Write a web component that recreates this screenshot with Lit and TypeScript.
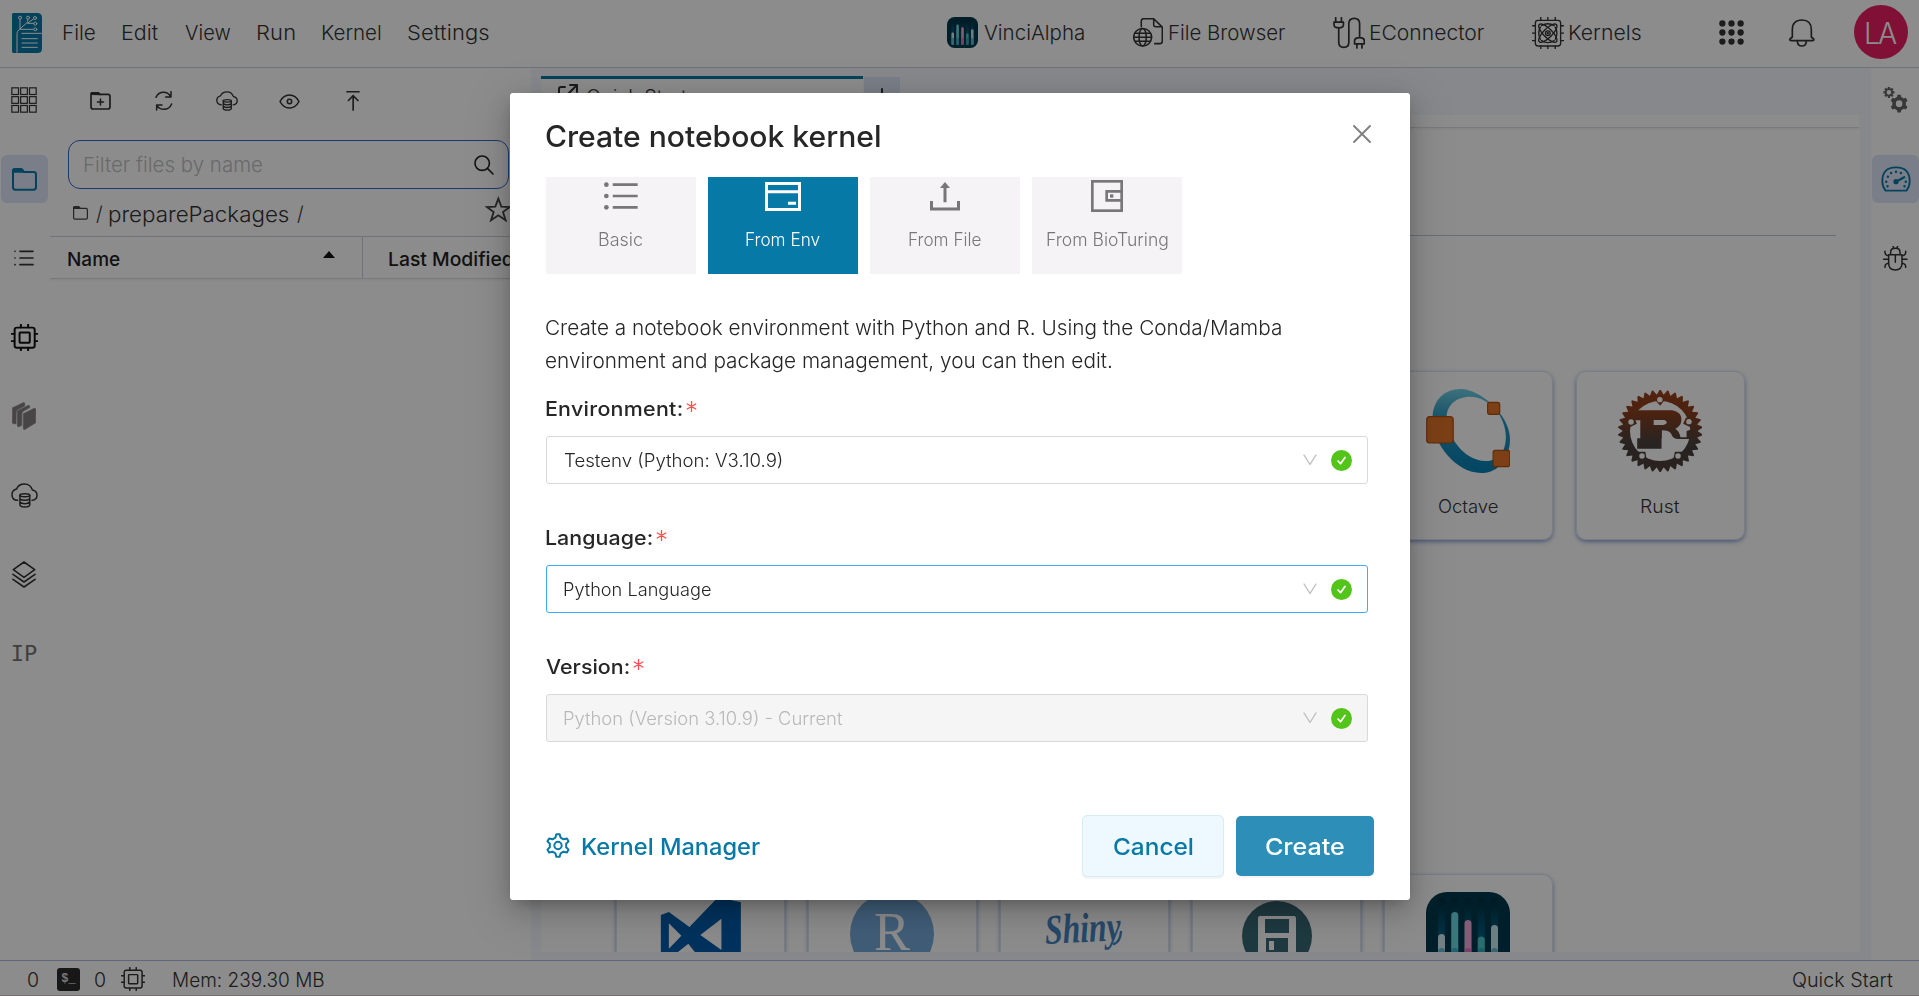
import { LitElement, html, svg, css } from "lit";
import { customElement } from "lit/decorators.js";

const FAMILY = 'Inter, "Liberation Sans", sans-serif';
const pen = document.createElement("canvas").getContext("2d")!;

// Text whose glyphs span exactly `width` pixels: slightly widened letters, the rest through letter-spacing.
const label = (text: string, width: number, size: number, weight = 400) => {
  pen.font = `${weight} ${size}px ${FAMILY}`;
  const m = pen.measureText(text);
  const ink = m.actualBoundingBoxLeft + m.actualBoundingBoxRight;
  const sx = Math.min(1.07, Math.max(0.95, width / ink));
  const ls = text.length > 1 ? (width / sx - ink) / (text.length - 1) : 0;
  return html`<span class="t" style="width:${width}px;font-size:${size}px;font-weight:${weight}"><span class="g" style="letter-spacing:${ls.toFixed(3)}px;transform:scaleX(${sx.toFixed(4)});text-indent:${m.actualBoundingBoxLeft.toFixed(2)}px">${text}</span></span>`;
};

const gear = (cx: number, cy: number, ro: number, ri: number, n: number, duty = 0.25, tip = 0.16) => {
  let d = "";
  for (let i = 0; i < n; i++) {
    const a = (i / n) * Math.PI * 2 - Math.PI / 2;
    const s = (Math.PI * 2) / n;
    const pts: [number, number][] = [[a - s * duty, ri], [a - s * tip, ro], [a + s * tip, ro], [a + s * duty, ri]];
    for (const [ang, r] of pts) d += `${d ? "L" : "M"}${(cx + r * Math.cos(ang)).toFixed(1)} ${(cy + r * Math.sin(ang)).toFixed(1)}`;
  }
  return d + "Z";
};

const icon = (w: number, h: number, box: string, body: unknown, cls = "") =>
  html`<svg class="ic ${cls}" width=${w} height=${h} viewBox=${box} preserveAspectRatio="none" fill="none" stroke="currentColor" stroke-width="6" stroke-linecap="round" stroke-linejoin="round">${body}</svg>`;

const logo = icon(30, 40, "36 39 90 120", svg`
  <path stroke="none" fill="#0779a6" d="M40 39H112Q126 39 126 54V146Q126 159 112 159H40Q36 159 36 154V44Q36 39 40 39Z"/>
  <g stroke="#fff" stroke-width="3"><path d="M51 157V101Q51 94 57 89L79 70Q84 66 84 58M60 58V87M100 57L82 70M84 70H101M60 88H100M66 100H124M66 116H112M66 129H112M66 142H112"/>
  <circle cx="60" cy="53" r="4.5"/><circle cx="84" cy="53" r="4.5"/><circle cx="105" cy="54" r="4.5"/><circle cx="106" cy="71" r="4.5"/><circle cx="106" cy="88" r="4.5"/></g>`);

const folder = (w: number, h: number, cls = "") => icon(w, h, "35 503 74 68", svg`
  <path d="M38 513V560Q38 567 45 567H99Q106 567 106 560V522Q106 515 99 515H70L63 507H44Q38 507 38 513Z"/>
  <path d="M38 514V509Q40 506 44 506H63L70 514Z" fill="currentColor"/>`, cls);

const newFolder = icon(21, 18, "272 276 62 54", svg`
  <path stroke-width="5" d="M275 284V321Q275 327 281 327H325Q331 327 331 321V289Q331 283 325 283H302L296 278H280Q275 278 275 284Z"/>
  <path fill="currentColor" stroke-width="4" d="M276 283V279H297L302 284Z"/><path stroke-width="4.5" d="M303 297V315M294 306H312"/>`);

const refresh = icon(18, 20, "466 273 54 60", svg`
  <g stroke-width="4.5"><path d="M469 292Q476 277 492 277Q506 277 513 290M514 275V291H498"/><path d="M516 312Q509 328 493 328Q479 328 471 316M471 330V315H487"/></g>`);

const cloudDb = (w: number, h: number, s = 4.5) => icon(w, h, "31 577 82 75", svg`
  <g stroke-width=${s}><path d="M51 629Q34 628 34 612Q34 598 48 595Q54 580 72 580Q90 580 96 598Q110 600 110 614Q110 628 95 629"/>
  <ellipse cx="73" cy="614" rx="15" ry="4.5"/><path d="M58 614V643Q60 649 73 649Q86 649 88 643V614M58 624Q62 629 73 629Q84 629 88 624M58 634Q62 639 73 639Q84 639 88 634"/></g>`);

const eye = icon(21, 15, "839 281 62 44", svg`
  <g stroke-width="4.5"><path d="M842 303Q852 284 870 284Q888 284 898 303Q888 322 870 322Q852 322 842 303Z"/><circle cx="870" cy="303" r="6.5"/></g>`);

const toTop = icon(14, 20, "1037 273 43 60", svg`<path stroke-width="5" stroke-linecap="butt" stroke-linejoin="miter" d="M1038 275H1079M1059 332V290M1043 303L1059 287L1075 303"/>`);

const squares = icon(26, 26, "33 264 78 78", svg`<g stroke-width="3.6" stroke-linejoin="miter">${[0, 1, 2].map((r) => [0, 1, 2].map((c) => svg`<rect x=${35.5 + c * 26.5} y=${266.5 + r * 26.5} width="20" height="20"/>`))}</g>`);

const list = icon(20, 16, "42 750 60 48", svg`<path stroke-width="5" d="M60 754H99M60 774H99M60 794H99"/><path stroke-width="5" d="M45 754H45.1M45 774H45.1M45 794H45.1"/>`);

const chip = (w: number, s = 6) => icon(w, w, "31 100 82 82", svg`
  <g stroke-width=${s}><rect x="42" y="111" width="61" height="61" rx="7"/><rect x="57" y="126" width="31" height="31" rx="2"/>
  <path d="M61 102V110M83 102V110M61 173V180M83 173V180M33 130H41M33 152H41M104 130H111M104 152H111"/></g>`);

const books = icon(24, 28, "36 335 72 85", svg`
  <g fill="currentColor" stroke-width="2"><path d="M37 353L70 337Q74 336 74 340V347L55 357Q48 360 48 366V401L41 401Q37 401 37 397Z"/>
  <path d="M52 362L84 346Q89 345 89 348V352L73 361Q65 364 65 372V406L56 410Q52 410 52 406Z"/><path d="M70 371L103 354Q107 353 107 358V398L75 418Q70 420 70 415Z"/></g>`);

const layers = icon(24, 27, "35 811 74 81", svg`<path stroke-width="5" d="M72 814L105 837L72 860L39 837ZM38 851L72 874L106 851M38 866L72 889L106 866"/>`);

const star = icon(26, 26, "1455 586 78 78", svg`<path stroke-width="5.5" stroke-linejoin="miter" d="M1495 594L1504 618L1529 619L1509 634L1517 659L1495 644L1473 659L1481 634L1461 619L1486 618Z"/>`);

const search = icon(20, 20, "1421 464 61 61", svg`<g stroke-width="5"><circle cx="1446" cy="489" r="22"/><path d="M1462 505L1479 522"/></g>`);

const vinci = (w: number, id: string) => {
  const bars: [number, number, string][] = [[24, 84, "#cfeaf0"], [50.5, 40, "#6ad8e0"], [77, 56, "#f0a8d8"], [103.5, 89, "#48c8c8"], [130, 66, "#c4e8ee"]];
  return icon(w, w, "0 0 168 168", svg`<defs>
    <linearGradient id=${id} x1="0" y1="0" x2="0" y2="1"><stop offset="0" stop-color="#00303f"/><stop offset=".7" stop-color="#006a90"/><stop offset="1" stop-color="#004a66"/></linearGradient></defs>
    <rect width="168" height="168" rx="42" stroke="none" fill="#023a4d"/>
    <g stroke="none">${bars.map(([x, y, c], i) => svg`<rect x=${x} y="13" width="14" height="140" fill=${`url(#${id})`}/><rect x=${x} y=${y} width="14" height=${152 - y} rx="7" fill=${c}/><rect x=${x} y="112" width="14" height="40" rx="7" fill=${i === 2 ? "#e04aa4" : "#1790b4"} opacity=".55"/>`)}</g>`);
};

const fileGlobe = icon(30, 29, "609 53 87 86", svg`
  <g stroke-width="4.5"><path d="M633 79V62Q633 55 640 55H669L694 80V122Q694 129 687 129H672M669 56V73Q669 79 675 79H692"/>
  <circle cx="637" cy="110" r="26"/><ellipse cx="637" cy="110" rx="10.5" ry="26"/><path d="M611 110H663M615 98H659M615 122H659"/></g>`);

const plug = icon(32, 32, "1205 49 95 95", svg`
  <g stroke-width="5"><path d="M1213 51V63M1230 51V63M1208 64H1236V72Q1236 81 1222 81Q1208 81 1208 72ZM1222 82V124Q1222 139 1237 139Q1252 139 1252 124V69Q1252 53 1268 53Q1284 53 1284 69V109M1269 129V120Q1269 110 1284 110Q1298 110 1298 120V129ZM1276 131V141M1291 131V141"/></g>`);

const kernelIcon = icon(32, 32, "305 49 95 95", svg`
  <g stroke-width="4"><rect x="315" y="59" width="75" height="76" rx="8"/><path d="M331 50V58M352 50V58M374 50V58M331 135V143M352 135V143M374 135V143M306 75H314M306 97H314M306 119H314M391 75H399M391 97H399M391 119H399"/>
  <ellipse cx="352" cy="97" rx="36" ry="13" transform="rotate(45 352 97)"/><ellipse cx="352" cy="97" rx="36" ry="13" transform="rotate(-45 352 97)"/><path d="M333 75Q352 63 371 75M333 119Q352 131 371 119M330 79Q320 97 330 115M374 79Q384 97 374 115"/><circle cx="352" cy="97" r="7"/><circle cx="352" cy="97" r="1.5"/></g>`);

const dots = icon(25, 25, "866 59 74 74", svg`<g stroke="none" fill="currentColor">${[0, 1, 2].map((r) => [0, 1, 2].map((c) => svg`<circle cx=${876 + c * 27} cy=${69 + r * 27} r="9.3"/>`))}</g>`);

const bell = icon(26, 28, "1076 54 78 84", svg`<g stroke-width="5"><path d="M1086 108V86Q1086 57 1115 57Q1143 57 1143 86V108L1150 114Q1152 119 1146 119H1083Q1077 119 1079 114Z"/><path d="M1101 121Q1102 135 1115 135Q1127 135 1128 121"/></g>`);

const gears = icon(25, 26, "1359 261 76 78", svg`<g stroke="none" fill="currentColor" fill-rule="evenodd">
  <path d=${gear(1377, 277, 17, 12.5, 8, 0.38, 0.24) + "M1370 277a7 7 0 1 0 14 0a7 7 0 1 0 -14 0Z"}/>
  <path d=${gear(1408, 311, 27, 21, 6, 0.3, 0.17) + "M1398 311a10 10 0 1 0 20 0a10 10 0 1 0 -20 0Z"}/></g>`);

const gauge = icon(30, 26, "1352 498 92 78", svg`
  <path stroke-width="5.5" d="M1366 572Q1356 560 1356 544Q1356 502 1398 502Q1440 502 1440 544Q1440 560 1430 572Z"/>
  <path stroke-width="7" d="M1398 545L1423 532"/><circle cx="1398" cy="545" r="5" fill="currentColor"/>
  <path stroke-width="7.5" d="M1372 559h.1M1368 545h.1M1373 530h.1M1383 519h.1M1398 515h.1M1413 519h.1M1428 545h.1M1424 559h.1"/>`);

const bug = icon(25, 25, "1361 737 75 75", svg`<g stroke-width="4.5">
  <path d="M1391 738L1393 743M1405 738L1403 743M1384 762V755Q1384 744 1398 744Q1412 744 1412 755V762M1378 763H1418V789Q1418 809 1398 809Q1378 809 1378 789ZM1398 766V786M1378 766Q1366 765 1367 753M1418 766Q1430 765 1429 753M1363 777H1377M1419 777H1433M1378 789Q1366 790 1367 801M1418 789Q1430 790 1429 801"/></g>`);

const terminal = html`<span class="term">$_</span>`;

const octave = icon(84, 84, "134 147 244 252", svg`<defs><linearGradient id="oc" x1="0" y1="0" x2="0" y2="1"><stop offset="0" stop-color="#6fd0e4"/><stop offset=".35" stop-color="#2a98c0"/><stop offset="1" stop-color="#0480b4"/></linearGradient></defs>
  <path stroke="none" fill="url(#oc)" fill-rule="evenodd" d="M236 147C290 147 378 224 378 296C378 356 344 399 294 399C224 399 153 315 153 235C153 182 186 147 236 147ZM262 170C219 170 194 198 194 232C194 290 246 363 306 363C346 363 366 334 366 290C366 226 314 170 262 170Z"/>
  <g fill="#e27428" stroke="#b04f12" stroke-width="3.5"><rect x="136" y="230" width="77" height="79" rx="9"/><rect x="313" y="187" width="35" height="36" rx="6"/><rect x="329" y="331" width="48" height="49" rx="6"/></g>`);

const rust = icon(84, 84, "692 146 245 252", svg`<defs><linearGradient id="ru" gradientUnits="userSpaceOnUse" x1="0" y1="148" x2="0" y2="396"><stop offset="0" stop-color="#98401a"/><stop offset=".28" stop-color="#8a3f1f"/><stop offset=".65" stop-color="#49423f"/><stop offset="1" stop-color="#4c3d35"/></linearGradient></defs>
  <g fill="url(#ru)" stroke="none"><path fill-rule="evenodd" d=${gear(815, 272, 123, 110, 34, 0.48, 0.08) + "M727 272a88 90 0 1 0 176 0a88 90 0 1 0 -176 0Z"}/>
  <path fill-rule="evenodd" d="M748 210H850Q878 215 877 240Q876 258 859 265Q871 272 874 291H892V272L912 265V296H868Q852 296 847 280Q840 270 820 270V294H819V325H748V294H757V240H730ZM796 239V254H824Q834 252 834 246Q834 240 824 239Z"/>
  <path d="M795 172H833L815 196ZM718 228L740 232L747 250L722 263ZM912 228L890 232L882 250L908 263ZM738 334H772L776 364L756 370ZM892 334H858L852 364L876 370Z"/></g>
  <g fill="#fff" stroke="none"><circle cx="814" cy="178" r="8"/><circle cx="730" cy="245" r="8"/><circle cx="899" cy="244" r="8"/><circle cx="762" cy="347" r="8"/><circle cx="867" cy="347" r="8"/></g>`);

const vscode = icon(84, 84, "256 336 147 252", svg`<path stroke="none" fill="#005cab" fill-rule="evenodd" d="M261 405L275 396L311 441L361 352L401 367V590L361 605L309 491L275 538L261 528ZM275 430V506L297 467ZM367 416L330 465L367 510Z"/>`);
const rstudio = icon(84, 84, "0 0 84 84", svg`<circle cx="42" cy="42" r="42" fill="#75aadb" stroke="none"/><text x="24" y="58" font-family="Liberation Serif, serif" font-size="54" textLength="36" lengthAdjust="spacingAndGlyphs" fill="#fff" stroke="none">R</text>`);
const shiny = icon(84, 84, "0 0 84 84", svg`<text x="3" y="50" font-family="Liberation Serif, serif" font-style="italic" font-weight="700" font-size="42" textLength="76" lengthAdjust="spacingAndGlyphs" fill="#4585c0" stroke="none" transform="rotate(-3 42 42)">Shiny</text>
  <path stroke="#4585c0" stroke-width="2.500" d="M72 52Q78 50 79 40"/>`);
const disk = icon(84, 84, "0 0 84 84", svg`<g stroke="none"><circle cx="43" cy="44" r="35" fill="#386875"/><path fill="#fff" d="M24 26Q24 24 26 24H60Q62 24 62 26V68H24Z"/><path fill="#386875" d="M31 27H55V41H31ZM32 46H54V68H32Z"/><path fill="#fff" d="M35 49H40V58H35Z"/></g>`);

const tileIcons = [
  icon(34, 28, "284 366 101 84", svg`<g stroke-width="8" stroke-linecap="butt"><path d="M310 374H384M310 408H384M310 442H384"/><g fill="currentColor" stroke="none"><circle cx="291" cy="374" r="7"/><circle cx="291" cy="408" r="7"/><circle cx="291" cy="442" r="7"/></g></g>`),
  icon(36, 29, "765 365 108 87", svg`<g stroke-width="9" stroke-linejoin="miter"><rect x="769.5" y="369.5" width="99" height="78"/><path stroke-linecap="butt" d="M768 394H870M834 429H858"/></g>`),
  icon(30, 29, "1260 366 90 86", svg`<path stroke-width="9" stroke-linecap="butt" stroke-linejoin="miter" d="M1264.500 422V446H1345.500V422M1305 426V374"/><path stroke="none" fill="currentColor" d="M1290 384L1305 366L1320 384Z"/>`),
  icon(32, 32, "0 0 96 96", svg`<g stroke-width="8" stroke-linejoin="miter"><rect x="4" y="4" width="88" height="88"/><path d="M92 34H47V61H92"/></g><path stroke="none" fill="currentColor" d="M57 43h10v10H57Z"/>`),
];

const kgear = icon(24, 25, "0 0 72 75", svg`<g stroke-width="6"><path d=${gear(36, 37.5, 34, 25, 6, 0.3, 0.14)}/><circle cx="36" cy="37.500" r="11"/></g>`);

@customElement("app-root")
export class AppRoot extends LitElement {
  static styles = css`
    :host { display: block; width: 1919px; height: 996px; overflow: hidden; background: #fff; color: #333; font-family: Inter, "Liberation Sans", sans-serif; }
    * { box-sizing: border-box; }
    .t { display: inline-block; white-space: nowrap; line-height: 1.2; flex: none; overflow: visible; padding-top: 2px; }
    .g { display: inline-block; transform-origin: 0 50%; }
    .ic { display: block; flex: none; }
    .page { height: 996px; display: flex; flex-direction: column; }
    header { height: 68px; flex: none; display: flex; align-items: center; padding: 0 11px 2px 12px; border-bottom: 1px solid #c4d2e2; }
    .menu { display: flex; gap: 27px; margin-left: 21px; }
    .apps { display: flex; gap: 48px; margin-left: auto; }
    .app { display: flex; align-items: center; gap: 6px; height: 32px; }
    .slot { width: 31px; display: flex; justify-content: center; }
    .grid9 { margin-left: 78px; }
    .bell { margin-left: 45px; }
    .avatar { width: 54px; height: 54px; border-radius: 50%; background: #e91e63; color: #fff; margin: 0 0 2px 39px; display: flex; align-items: center; justify-content: center; }
    .body { flex: 1; display: flex; min-height: 0; }
    .side { width: 50px; flex: none; padding-top: 8px; display: flex; flex-direction: column; gap: 31px; }
    .side.right { width: 48px; }
    .item { height: 48px; width: 47px; margin-left: 1px; padding-right: 1px; display: flex; align-items: center; justify-content: center; border-radius: 6px; }
    .right .item { padding-right: 0; }
    .item.on { background: #dfe6f8; color: #0779a6; }
    .item.black { color: #111; }
    .item.soft { color: #837f80; }
    .item.mid { color: #656565; }
    .ip { font: 22px "DejaVu Sans Mono", monospace; color: #757575; }
    .files { width: 481px; flex: none; }
    .tools { height: 72px; padding: 0 0 6px 19px; display: flex; align-items: center; }
    .tool { width: 63px; display: flex; justify-content: center; }
    .filter { width: 441px; height: 49px; margin-left: 18px; border: 1px solid #2f66cc; border-radius: 12px; padding: 0 14px 0 15px; display: flex; align-items: center; justify-content: space-between; color: #bfbfbf; }
    .filter .ic { color: #222; }
    .crumbs { height: 47px; padding: 1px 20px 0 23px; display: flex; align-items: center; }
    .crumbs .ic { color: #444; }
    .crumbs > .t { margin-left: 7.5px; }
    .crumbs .star { margin: -9px 0 0 auto; color: #5f5f5f; }
    .cols { height: 43px; border-top: 1px solid #ccd0dd; border-bottom: 1px solid #dcdcdc; box-shadow: 0 1px 2px #0001; display: flex; align-items: stretch; }
    .col { display: flex; flex: none; align-items: center; padding: 3px 27px 0 18px; color: #222; }
    .name { width: 313px; border-right: 1px solid #ccd0dd; justify-content: space-between; }
    .name .ic { margin-top: -10px; }
    .mod { padding-left: 26px; }
    .files { overflow: hidden; }
    .main { flex: 1; background: #f5f8fd; padding: 8px 11px 8px 10px; display: flex; flex-direction: column; min-width: 0; }
    .tabs { display: flex; height: 39px; gap: 1px; flex: none; }
    .tab { width: 322px; background: #fff; border-top: 3px solid #0779a6; display: flex; padding: 4px 0 0 17px; gap: 9px; }
    .tab .ic { margin-top: 1px; }
    .add { width: 36px; margin-top: 1px; background: #dfe6f8; display: flex; justify-content: center; padding-top: 11px; }
    .content { flex: 1; background: #fff; overflow: hidden; }
    .band { height: 13px; border-bottom: 1px solid #dedede; box-shadow: 0 1px 2px #0001; margin-right: 1px; }
    .rule { height: 108px; border-bottom: 1px solid #b9cbe2; margin: 0 24px 135px 24px; }
    .cards { display: grid; grid-template-columns: repeat(6, 169px); gap: 23px; margin-left: 74.5px; }
    .cards.low { margin-top: 334px; }
    .card { height: 169px; border: 1px solid #dbe3f6; border-radius: 10px; box-shadow: 0 2px 4px #4a6ab8a0; display: flex; flex-direction: column; align-items: center; padding-top: 17px; gap: 21px; }
    .c5 { grid-column: 5; }
    footer { height: 36px; flex: none; border-top: 1px solid #a9bce0; border-bottom: 1px solid #d9c9d0; display: flex; align-items: center; padding: 2px 26px 0 28px; }
    .term { width: 23px; height: 23px; border-radius: 3px; background: #2c2c2c; color: #ddd; font: 700 12px "Liberation Mono", monospace; line-height: 23px; text-align: center; margin: 0 15px 0 19px; }
    footer .ic { margin: 0 28px 0 16px; }
    footer .t { padding-top: 3px; }
    .end { margin-left: auto; display: flex; }
    .mask { position: fixed; inset: 0; background: rgba(0, 0, 0, 0.45); padding: 93px 0 0 510px; }
    .modal { width: 900px; height: 807px; background: #fff; border-radius: 3px; box-shadow: 0 6px 16px -8px #00000052, 0 9px 28px #00000033, 0 12px 48px 16px #00000014; padding: 0 36px; color: #262626; display: flex; flex-direction: column; }
    .head { height: 84px; display: flex; justify-content: space-between; align-items: center; padding: 1px 3px 0 0; flex: none; }
    .head .ic { color: #808080; margin-top: -3px; }
    .tiles { display: flex; gap: 12px; }
    .tile { width: 150px; height: 97px; background: #f5f3f5; color: #777; display: flex; flex-direction: column; align-items: center; }
    .tile.on { background: #0779a6; color: #fff; }
    .pic { height: 38px; display: flex; align-items: center; }
    .tile .t { margin-top: 12px; }
    .about { height: 66px; margin: 37px 0 17px; display: flex; flex-direction: column; }
    .line { height: 33px; display: flex; align-items: center; }
    .field { height: 129px; }
    .cap { height: 42px; display: flex; align-items: center; gap: 4px; padding-bottom: 14px; }
    .cap .ic { color: #ff4d4f; margin-bottom: 3px; }
    .select { width: 822px; height: 48px; border: 1px solid #d9d9d9; border-radius: 3px; padding: 0 15px 0 17px; display: flex; align-items: center; }
    .select.focus { border-color: #40a9ff; }
    .select.off { background: #f5f5f5; color: #b8b8b8; }
    .chev { margin: 0 14px 0 auto; color: #bfbfbf; }
    .foot { display: flex; align-items: center; height: 62px; margin-top: 34px; color: #0779a6; }
    .foot > .ic { margin: -2px 12px 0 0; }
    .btn { display: flex; align-items: center; justify-content: center; border-radius: 5px; width: 138px; height: 60px; background: #2d8fb7; color: #fff; box-shadow: 0 2px 0 #0000000a; }
    .cancel { margin: 0 12px 0 auto; width: 142px; height: 62px; background: #edf8ff; border: 1px solid #d3edf9; color: #0779a6; }
  `;

  private field(name: string, nw: number, value: string, vw: number, cls = "") {
    return html`<div class="field"><div class="cap">${label(name, nw, 20, 550)}
      ${icon(11, 11, "0 0 22 22", svg`<path stroke-width="2.6" d="M11 1V21M2.500 6L19.500 16M2.500 16L19.500 6"/>`)}</div>
      <div class="select ${cls}">${label(value, vw, 18, 350)}
        ${icon(14, 12, "0 0 14 12", svg`<path stroke-width="1.4" d="M1 1L7 10.500L13 1"/>`, "chev")}
        ${icon(21, 21, "0 0 21 21", svg`<circle cx="10.500" cy="10.500" r="10.500" fill="#52c41a" stroke="none"/><path stroke="#fff" stroke-width="1.700" d="M7 11L9.500 13.700L14 7.500"/>`)}
      </div></div>`;
  }

  render() {
    const menu: [string, number][] = [["File", 32], ["Edit", 36], ["View", 45], ["Run", 38], ["Kernel", 59], ["Settings", 81]];
    const apps: [unknown, string, number][] = [[vinci(31, "va"), "VinciAlpha", 100], [fileGlobe, "File Browser", 116], [plug, "EConnector", 114], [kernelIcon, "Kernels", 72]];
    const tiles: [string, number][] = [["Basic", 44], ["From Env", 74], ["From File", 72], ["From BioTuring", 121]];
    return html`
      <div class="page">
        <header>${logo}
          <nav class="menu">${menu.map(([s, w]) => label(s, w, 20.5, 350))}</nav>
          <div class="apps">${apps.map(([i, s, w]) => html`<div class="app"><span class="slot">${i}</span>${label(s, w, 20.5, 350)}</div>`)}</div>
          <span class="grid9">${dots}</span><span class="bell">${bell}</span>
          <div class="avatar">${label("LA", 31, 30, 300)}</div>
        </header>
        <div class="body">
          <div class="side">
            <div class="item">${squares}</div><div class="item on">${folder(25, 23)}</div><div class="item">${list}</div>
            <div class="item black">${chip(27)}</div><div class="item soft">${books}</div><div class="item">${cloudDb(27, 25)}</div>
            <div class="item">${layers}</div><div class="item ip">IP</div>
          </div>
          <div class="files">
            <div class="tools">${[newFolder, refresh, cloudDb(22, 20, 5), eye, toTop].map((i) => html`<span class="tool">${i}</span>`)}</div>
            <div class="filter">${label("Filter files by name", 178, 20.5, 300)}${search}</div>
            <div class="crumbs">${folder(15, 14)}${label("/", 6, 20, 350)}${label("preparePackages", 180, 22, 350)}${label("/", 6, 20, 350)}<span class="star">${star}</span></div>
            <div class="cols"><div class="col name">${label("Name", 52, 19, 550)}${icon(12, 7, "0 0 12 7", svg`<path stroke="none" fill="#111" d="M0 7L6 0L12 7Z"/>`)}</div>
              <div class="col mod">${label("Last Modified", 124, 19, 450)}</div></div>
          </div>
          <div class="main">
            <div class="tabs"><div class="tab">${icon(20, 20, "0 0 20 20", svg`<path stroke-width="2" d="M7 3H3Q1 3 1 5V17Q1 19 3 19H15Q17 19 17 17V12M12 1H19V8M19 1L9 11"/>`)}${label("Quick Start", 100, 20, 350)}</div>
              <div class="add">${icon(14, 14, "0 0 14 14", svg`<path stroke-width="2" d="M7 1V13M1 7H13"/>`)}</div></div>
            <div class="content"><div class="band"></div><div class="rule"></div>
              <div class="cards"><div class="card c5">${octave}${label("Octave", 59, 18, 350)}</div><div class="card">${rust}${label("Rust", 38, 18, 350)}</div></div>
              <div class="cards low">${[vscode, rstudio, shiny, disk, vinci(84, "vb")].map((i) => html`<div class="card">${i}</div>`)}</div>
            </div>
          </div>
          <div class="side right"><div class="item mid">${gears}</div><div class="item on">${gauge}</div><div class="item">${bug}</div></div>
        </div>
        <footer>${label("0", 10, 19.5, 350)}${terminal}${label("0", 10, 19.5, 350)}${chip(24, 5)}${label("Mem: 239.30 MB", 151, 19.5, 350)}<span class="end">${label("Quick Start", 100, 19.5, 350)}</span></footer>
      </div>
      <div class="mask"><div class="modal">
        <div class="head">${label("Create notebook kernel", 334, 29.5, 550)}${icon(18, 18, "0 0 18 18", svg`<path stroke-width="1.900" d="M1 1L17 17M17 1L1 17"/>`)}</div>
        <div class="tiles">${tiles.map(([s, w], i) => html`<div class="tile ${i === 1 ? "on" : ""}"><span class="pic">${tileIcons[i]}</span>${label(s, w, 18, 350)}</div>`)}</div>
        <div class="about"><span class="line">${label("Create a notebook environment with Python and R. Using the Conda/Mamba", 735, 20.5, 350)}</span>
          <span class="line">${label("environment and package management, you can then edit.", 565, 20.5, 350)}</span></div>
        ${this.field("Environment:", 136, "Testenv (Python: V3.10.9)", 218)}
        ${this.field("Language:", 106, "Python Language", 147, "focus")}
        ${this.field("Version:", 83, "Python (Version 3.10.9) - Current", 278, "off")}
        <div class="foot">${kgear}${label("Kernel Manager", 178, 23.5, 550)}<div class="btn cancel">${label("Cancel", 79, 23.5, 550)}</div><div class="btn">${label("Create", 78, 23.5, 550)}</div></div>
      </div></div>`;
  }
}
